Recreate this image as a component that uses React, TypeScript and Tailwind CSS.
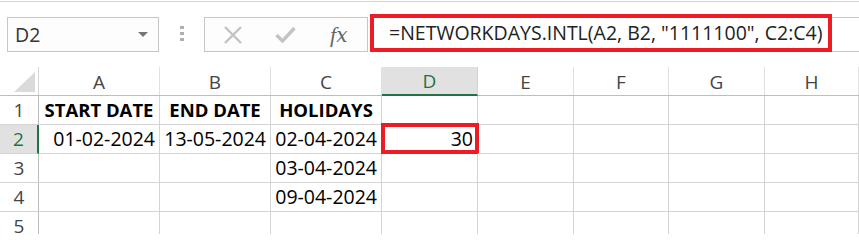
import React from "react";

const cols = [
	{ key: "A", w: "w-[121px]" },
	{ key: "B", w: "w-[111px]" },
	{ key: "C", w: "w-[111px]" },
	{ key: "D", w: "w-[96px]" },
	{ key: "E", w: "w-[96px]" },
	{ key: "F", w: "w-[95px]" },
	{ key: "G", w: "w-[96px]" },
	{ key: "H", w: "flex-1" },
];

const rows: Record<number, Record<string, { text: string; bold?: boolean; align?: "center" | "right" }>> = {
	1: {
		A: { text: "START DATE", bold: true, align: "center" },
		B: { text: "END DATE", bold: true, align: "center" },
		C: { text: "HOLIDAYS", bold: true, align: "center" },
	},
	2: {
		A: { text: "01-02-2024", align: "right" },
		B: { text: "13-05-2024", align: "right" },
		C: { text: "02-04-2024", align: "right" },
		D: { text: "30", align: "right" },
	},
	3: { C: { text: "03-04-2024", align: "right" } },
	4: { C: { text: "09-04-2024", align: "right" } },
	5: {},
};

function ColumnHeader() {
	return (
		<div className="flex h-[29px] border-b border-[#bdbdbd]">
			<div className="w-[39px] shrink-0 border-r border-[#d4d4d4] flex items-end justify-end pr-[3px] pb-[3px]">
				<div className="w-0 h-0 border-l-[21px] border-l-transparent border-b-[20px] border-b-[#dadada]" />
			</div>
			{cols.map((c) => (
				<div
					key={c.key}
					className={`${c.w} shrink-0 flex items-center justify-center pt-[2px] text-[19px] ${
						c.key === "D"
							? "bg-[#e1e1e1] text-[#217346] border-b-2 border-[#217346] -mb-[1px] border-r border-r-[#d4d4d4]"
							: "text-[#444] border-r border-[#e1e1e1]"
					}`}
				>
					{c.key}
				</div>
			))}
		</div>
	);
}

function Row({ n }: { n: number }) {
	const data = rows[n];
	const selected = n === 2;
	return (
		<div className="flex h-[29px]">
			<div
				className={`w-[39px] shrink-0 flex items-center justify-center text-[19px] border-b border-[#d4d4d4] ${
					selected
						? "bg-[#e1e1e1] text-[#217346] border-r-2 border-r-[#217346]"
						: "text-[#444] border-r border-r-[#bdbdbd]"
				}`}
			>
				{n}
			</div>
			{cols.map((c) => {
				const cell = data[c.key];
				return (
					<div
						key={c.key}
						className={`${c.w} shrink-0 relative flex items-center border-r border-b border-[#d4d4d4] text-black ${
							cell?.align === "center" ? "justify-center" : "justify-end pr-[4px]"
						} ${cell?.bold ? "font-bold text-[18.5px]" : "text-[19.5px]"}`}
					>
						{cell?.text}
						{n === 2 && c.key === "D" && (
							<div className="absolute -left-[1px] -top-[2px] w-[98px] h-[31px] border-4 border-[#ed1c24]" />
						)}
					</div>
				);
			})}
		</div>
	);
}

export default function App() {
	return (
		<div className="w-[859px] h-[234px] bg-white overflow-hidden font-['Open_Sans',sans-serif]">
			<div className="h-[1px] mt-[1px] bg-[#d4d4d4]" />
			{/* formula bar */}
			<div className="flex items-start mt-[12px] h-[38px]">
				<div className="ml-[7px] mt-[3px] w-[152px] h-[35px] border border-[#c6c6c6] bg-[#fdfdfd] flex items-center pl-[7px] pr-[10px] text-[19.5px] text-[#333]">
					<span className="flex-1">D2</span>
					<span className="w-0 h-0 border-x-[5px] border-x-transparent border-t-[5px] border-t-[#777]" />
				</div>
				<div className="w-[45px] h-[38px] flex flex-col items-center justify-center gap-[3px] pl-[1px]">
					<span className="w-[4px] h-[3px] bg-[#b0b0b0]" />
					<span className="w-[4px] h-[3px] bg-[#b0b0b0]" />
					<span className="w-[4px] h-[3px] bg-[#b0b0b0]" />
				</div>
				<div className="mt-[3px] w-[164px] h-[35px] border border-[#c6c6c6] bg-[#fdfdfd] flex items-center">
					<svg className="ml-[18px]" width="20" height="18" viewBox="0 0 20 18">
						<path d="M2 1 L18 17 M18 1 L2 17" stroke="#c3c3c3" strokeWidth="2.4" fill="none" />
					</svg>
					<svg className="ml-[32px]" width="21" height="17" viewBox="0 0 21 17">
						<path d="M1.5 9 L7.5 15 L19.5 2" stroke="#c3c3c3" strokeWidth="3.4" fill="none" />
					</svg>
					<span className="ml-[34px] font-['DejaVu_Serif',serif] italic text-[20px] text-[#666] leading-none">
						<span className="font-['Liberation_Serif',serif] text-[22px]">f</span>x
					</span>
				</div>
				<div className="ml-[2px] w-[462px] h-[38px] border-4 border-[#ed1c24] bg-white flex items-center pl-[15px] text-[19.5px] text-[#222] whitespace-nowrap">
					=NETWORKDAYS.INTL(A2, B2, "1111100", C2:C4)
				</div>
				<div className="flex-1 mt-[3px] h-[35px] border-y border-[#c6c6c6]" />
			</div>
			<div className="mt-[15px]">
				<ColumnHeader />
				{[1, 2, 3, 4, 5].map((n) => (
					<Row key={n} n={n} />
				))}
			</div>
		</div>
	);
}
